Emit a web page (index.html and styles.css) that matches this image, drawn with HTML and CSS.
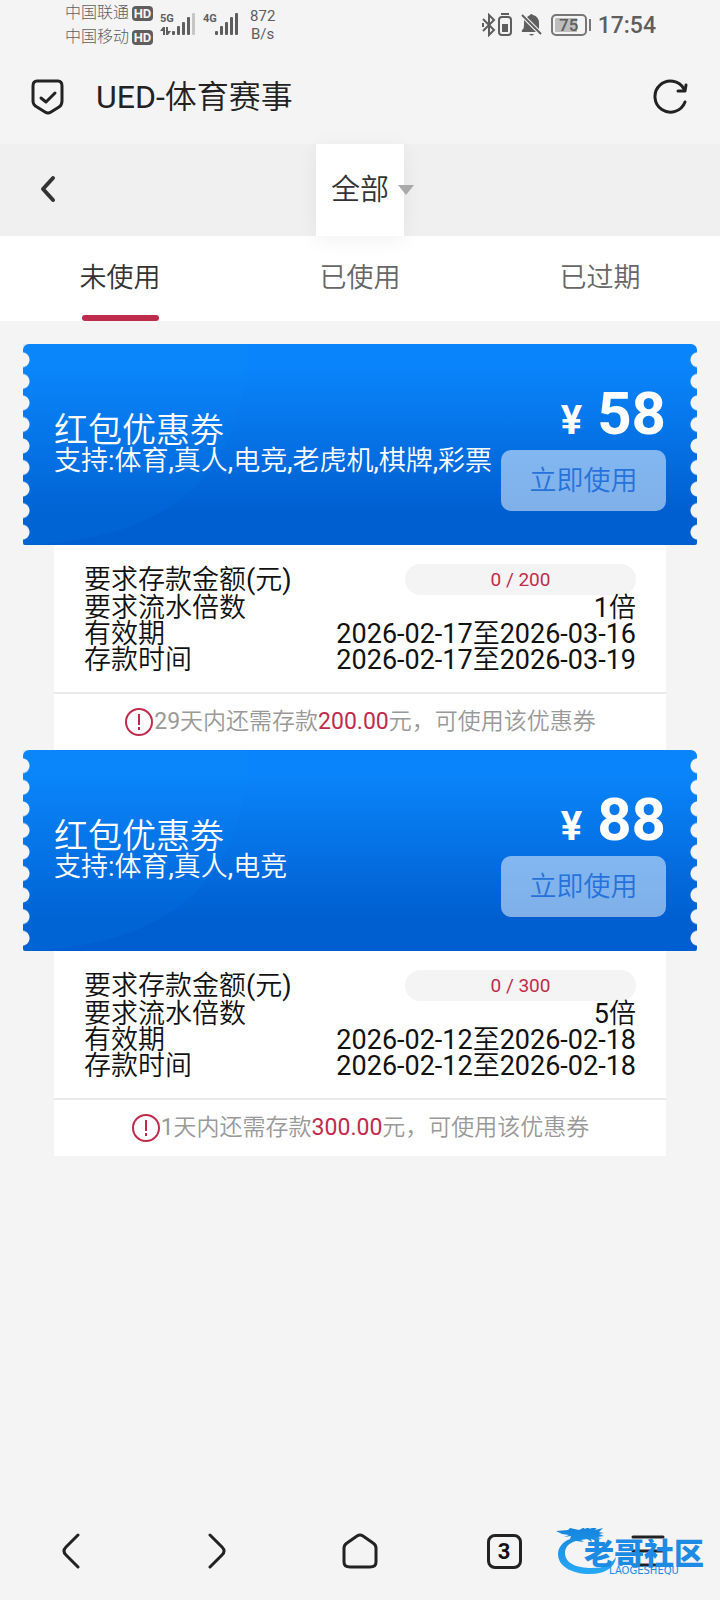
FILE: index.html
```html
<!DOCTYPE html>
<html lang="zh-CN">
<head>
<meta charset="utf-8">
<meta name="viewport" content="width=device-width, initial-scale=1">
<title>UED-体育赛事</title>
<link rel="stylesheet" href="styles.css">
</head>
<body>
<div class="status">
  <div class="carriers">
    <div class="carrier">中国联通<span class="hd">HD</span></div>
    <div class="carrier">中国移动<span class="hd">HD</span></div>
  </div>
  <svg class="signal" width="36" height="26" viewBox="0 0 36 26" fill="#5e5e5e" aria-hidden="true">
    <text class="gen" x="0" y="10">5G</text>
    <path d="M3 15v8h2v-8zM0 19l3-4v4zM6 15v8h2v-8zM8 23l3-4H8z"/>
    <rect x="12" y="19" width="3" height="4" rx="1"/><rect x="17" y="14" width="3" height="9" rx="1"/><rect x="22" y="10" width="3" height="13" rx="1"/><rect x="27" y="5" width="3" height="18" rx="1"/><rect x="32" y="1" width="3" height="22" rx="1" fill="#c6c6c6"/>
  </svg>
  <svg class="signal" width="36" height="26" viewBox="0 0 36 26" fill="#5e5e5e" aria-hidden="true">
    <text class="gen" x="0" y="10">4G</text>
    <rect x="12" y="19" width="3" height="4" rx="1"/><rect x="17" y="14" width="3" height="9" rx="1"/><rect x="22" y="10" width="3" height="13" rx="1"/><rect x="27" y="5" width="3" height="18" rx="1"/><rect x="32" y="1" width="3" height="22" rx="1"/>
  </svg>
  <div class="speed">872<br>B/s</div>
  <div class="status-right">
    <svg width="32" height="24" viewBox="0 0 32 24" fill="none" stroke="#5e5e5e" stroke-width="2" aria-hidden="true">
      <path d="M2 6l11 11-5 5V2l5 5L2 18"/><path d="M2 10v4" />
      <rect x="18" y="4" width="12" height="18" rx="3"/><path d="M20 1h8"/><rect x="21" y="11" width="6" height="8" fill="#5e5e5e" stroke="none"/>
    </svg>
    <svg width="22" height="24" viewBox="0 0 22 24" fill="#5e5e5e" aria-hidden="true">
      <path d="M6 4c1-1 2-1 3-2q1-2 3 0c4 1 6 4 6 8v6zM3 7l12 12H1q-1-1 1-3 1-1 1-4zM8 21h5q-2 3-5 0z"/><path d="M1 2l19 19" stroke="#5e5e5e" stroke-width="2"/>
    </svg>
    <span class="battery">75</span>
    <span class="clock">17:54</span>
  </div>
</div>

<header class="address">
  <svg width="36" height="38" viewBox="0 0 36 38" fill="none" stroke="#222" stroke-width="3" stroke-linecap="round" stroke-linejoin="round" aria-hidden="true">
    <path d="M7 3h21q4 0 4 5v15q0 4-3 6l-8 5q-3 2-6 0l-8-5q-4-2-4-6V8q0-5 4-5z"/><path d="M11 20l5 4 9-9"/>
  </svg>
  <h1 class="address-title">UED-体育赛事</h1>
  <button class="icon-button" type="button" aria-label="刷新">
    <svg width="36" height="36" viewBox="0 0 36 36" fill="none" stroke="#222" stroke-width="3" stroke-linecap="round" stroke-linejoin="round">
      <path d="M32 23A15.500 15.500 0 1 1 31 10"/><path d="M25 12h7l1-6"/>
    </svg>
  </button>
</header>

<nav class="filter">
  <button class="icon-button" type="button" aria-label="返回">
    <svg width="18" height="28" viewBox="0 0 18 28" fill="none" stroke="#333" stroke-width="4" stroke-linecap="round" stroke-linejoin="round"><path d="M15 3L5 14l10 11"/></svg>
  </button>
  <button class="filter-choice" type="button">全部</button>
</nav>

<nav class="tabs">
  <button class="tab tab-active" type="button">未使用</button>
  <button class="tab" type="button">已使用</button>
  <button class="tab" type="button">已过期</button>
</nav>

<main class="coupons">
  <article class="coupon">
    <div class="coupon-head">
      <svg class="coupon-art" width="260" height="201" viewBox="0 0 260 201" aria-hidden="true"><path d="M0 0h225C224 80 195 195 0 201z"/><path d="M0 21h154C152 80 110 130 0 138z"/></svg>
      <div class="coupon-info">
        <h2 class="coupon-title">红包优惠劵</h2>
        <p class="coupon-scope">支持:体育,真人,电竞,老虎机,棋牌,彩票</p>
      </div>
      <div class="coupon-side">
        <p class="price"><span class="yen">¥</span> 58</p>
        <button class="use" type="button">立即使用</button>
      </div>
    </div>
    <div class="coupon-body">
      <dl class="rows">
        <div class="row row-first"><dt>要求存款金额(元)</dt><dd class="pill">0 / 200</dd></div>
        <div class="row"><dt>要求流水倍数</dt><dd>1倍</dd></div>
        <div class="row"><dt>有效期</dt><dd>2026-02-17至2026-03-16</dd></div>
        <div class="row"><dt>存款时间</dt><dd>2026-02-17至2026-03-19</dd></div>
      </dl>
      <p class="notice">
        <svg width="30" height="30" viewBox="0 0 30 30" fill="none" stroke="#c02b4c" stroke-width="2" aria-hidden="true"><circle cx="15" cy="15" r="13"/><path d="M15 7v11M15 20v3"/></svg>
        <span>29天内还需存款<b class="due">200.00</b>元，可使用该优惠券</span>
      </p>
    </div>
  </article>

  <article class="coupon">
    <div class="coupon-head">
      <svg class="coupon-art" width="260" height="201" viewBox="0 0 260 201" aria-hidden="true"><path d="M0 0h225C224 80 195 195 0 201z"/><path d="M0 21h154C152 80 110 130 0 138z"/></svg>
      <div class="coupon-info">
        <h2 class="coupon-title">红包优惠劵</h2>
        <p class="coupon-scope">支持:体育,真人,电竞</p>
      </div>
      <div class="coupon-side">
        <p class="price"><span class="yen">¥</span> 88</p>
        <button class="use" type="button">立即使用</button>
      </div>
    </div>
    <div class="coupon-body">
      <dl class="rows">
        <div class="row row-first"><dt>要求存款金额(元)</dt><dd class="pill">0 / 300</dd></div>
        <div class="row"><dt>要求流水倍数</dt><dd>5倍</dd></div>
        <div class="row"><dt>有效期</dt><dd>2026-02-12至2026-02-18</dd></div>
        <div class="row"><dt>存款时间</dt><dd>2026-02-12至2026-02-18</dd></div>
      </dl>
      <p class="notice">
        <svg width="30" height="30" viewBox="0 0 30 30" fill="none" stroke="#c02b4c" stroke-width="2" aria-hidden="true"><circle cx="15" cy="15" r="13"/><path d="M15 7v11M15 20v3"/></svg>
        <span>1天内还需存款<b class="due">300.00</b>元，可使用该优惠券</span>
      </p>
    </div>
  </article>
</main>

<footer class="toolbar">
  <button class="icon-button" type="button" aria-label="后退">
    <svg width="36" height="36" viewBox="0 0 36 36" class="line"><path d="M24 2L12 14q-4 4 0 8l12 12"/></svg>
  </button>
  <button class="icon-button" type="button" aria-label="前进">
    <svg width="36" height="36" viewBox="0 0 36 36" class="line"><path d="M12 2l12 12q4 4 0 8L12 34"/></svg>
  </button>
  <button class="icon-button" type="button" aria-label="主页">
    <svg width="36" height="36" viewBox="0 0 36 36" class="line"><path d="M15 3q3-2 6 0l10 7q3 2 3 5v14q0 5-6 5H8q-6 0-6-5V15q0-3 3-5z"/></svg>
  </button>
  <button class="icon-button" type="button" aria-label="标签页"><span class="count">3</span></button>
  <button class="icon-button" type="button" aria-label="菜单">
    <svg width="36" height="36" viewBox="0 0 36 36" class="line"><path d="M3 4h30M3 18h30M3 32h25"/></svg>
  </button>
  <div class="brand">
    <svg class="brand-mark" width="64" height="50" viewBox="0 0 64 50" aria-hidden="true">
      <defs><linearGradient id="wave" x1="0" y1="0" x2="0" y2="1"><stop offset="0" stop-color="#1583dc"/><stop offset="1" stop-color="#27a9f5"/></linearGradient></defs>
      <path fill="url(#wave)" d="M14 11C6 14 2 20 2 26c0 12 13 20 32 20 16 0 25-7 26-17-5 8-13 11-24 11-16 0-27-5-27-15 0-6 4-10 11-12l8 1-3-2 6-1 5 3-1-3 6 2-2-3 7 1-4-2 6-1-5-2 5-1-5-1 4-4-8 2 3-4-9 3 1-2-6 2 1-2-6 3-9-2-2 2L0 3l6 3 7 1-5 2 7-1z"/>
    </svg>
    <div class="brand-text"><span class="brand-name">老哥社区</span><span class="brand-latin">LAOGESHEQU</span></div>
  </div>
</footer>
</body>
</html>
```

FILE: styles.css
```css
* { box-sizing: border-box; }

body {
  margin: 0;
  min-height: 100vh;
  display: flex;
  flex-direction: column;
  background: #f4f4f4;
  color: #111;
  font-family: Roboto, "Noto Sans CJK SC DemiLight", "Noto Sans CJK SC", sans-serif;
}

h1, h2, p, dl, dd { margin: 0; font-weight: 400; }

button {
  padding: 0;
  border: 0;
  background: none;
  color: inherit;
  font: inherit;
}

svg { display: block; flex: none; }

.icon-button { display: flex; align-items: center; justify-content: center; }

/* Status bar */
.status {
  display: flex;
  align-items: center;
  gap: 7px;
  height: 50px;
  padding: 0 64px 0 65px;
  color: #5e5e5e;
}

.carriers {
  font-family: Roboto, "Noto Sans CJK SC", sans-serif;
  font-size: 16px;
  font-weight: 300;
  line-height: 24px;
}

.carrier { display: flex; align-items: center; gap: 3px; }

.hd {
  width: 21px;
  border-radius: 4px;
  background: #5e5e5e;
  color: #f4f4f4;
  font-size: 13px;
  font-weight: 700;
  line-height: 15px;
  text-align: center;
}

.gen { font: 700 11px Roboto, sans-serif; }
.speed { margin-left: 4px; font-size: 15px; line-height: 18px; text-align: center; }
.status-right { display: flex; align-items: center; gap: 8px; margin-left: auto; }

.battery {
  position: relative;
  width: 36px;
  border: 2px solid #777;
  border-radius: 5px;
  background: linear-gradient(90deg, #bdbdbd 75%, #f4f4f4 75%);
  box-shadow: inset 0 0 0 2px #f4f4f4;
  font-size: 17px;
  font-weight: 500;
  line-height: 18px;
  text-align: center;
}

.battery::after {
  content: "";
  position: absolute;
  top: 3px;
  right: -6px;
  width: 2px;
  height: 12px;
  background: #777;
}

.clock { margin-left: 3px; font-size: 23px; font-weight: 500; }

/* Browser address bar */
.address {
  display: flex;
  align-items: center;
  gap: 30px;
  height: 94px;
  padding: 0 31px 0 30px;
}

.address-title { flex: 1; color: #222; font-size: 32px; line-height: 40px; }

/* Page header */
.filter {
  display: grid;
  grid-template-columns: 1fr auto 1fr;
  height: 92px;
  padding: 0 38px;
  background: #f0f0f0;
}

.filter .icon-button { justify-self: start; padding-bottom: 2px; }

.filter-choice {
  position: relative;
  z-index: 1;
  width: 88px;
  padding-bottom: 6px;
  background: #fff;
  box-shadow: 0 4px 20px rgba(0, 0, 0, 0.06);
  color: #333;
  font-size: 29px;
}

.filter-choice::after {
  content: "";
  position: absolute;
  top: 41px;
  right: -10px;
  border: 8px solid transparent;
  border-top: 10px solid #aaa;
  border-bottom: 0;
}

.tabs {
  display: grid;
  grid-template-columns: repeat(3, 1fr);
  height: 85px;
  background: #fff;
}

.tab {
  display: flex;
  flex-direction: column;
  align-items: center;
  padding-top: 22px;
  color: #666;
  font-size: 27px;
  line-height: 40px;
}

.tab-active { color: #333; }

.tab-active::after {
  content: "";
  width: 77px;
  height: 6px;
  margin-top: auto;
  border-radius: 3px;
  background: #c02b4c;
}

/* Coupons */
.coupons { flex: 1; padding: 23px 23px 0; }

.coupon-head {
  position: relative;
  display: flex;
  justify-content: space-between;
  height: 201px;
  padding: 0 31px;
  border-radius: 6px 6px 2px 2px;
  background: linear-gradient(#0a84fa 0%, #0a84fa 12%, #005fd0 84%);
  color: #fff;
}

.coupon-head::before,
.coupon-head::after {
  content: "";
  position: absolute;
  top: 5px;
  bottom: 2px;
  left: 0;
  width: 7px;
  background: radial-gradient(circle at -1px 50%, #f4f4f4 7px, transparent 8px) 0 0 / 7px 22px;
  background-repeat: no-repeat round;
}

.coupon-head::before { z-index: 1; }
.coupon-head::after { right: 0; left: auto; transform: scaleX(-1); }

.coupon-art {
  position: absolute;
  top: 0;
  left: 0;
  fill: #0a90ff;
  opacity: 0.1;
}

.coupon-info { position: relative; padding-top: 69px; white-space: nowrap; }
.coupon-title { font-size: 34px; line-height: 35px; }
.coupon-scope { font-size: 27px; line-height: 27px; }

.coupon-side {
  position: relative;
  display: flex;
  flex-direction: column;
  align-items: flex-end;
  padding-top: 36px;
}

.price { height: 70px; font-size: 60px; font-weight: 700; line-height: 68px; }
.yen { font-size: 40px; line-height: 40px; }

.use {
  width: 165px;
  height: 61px;
  padding-bottom: 4px;
  border-radius: 10px;
  background: rgba(255, 255, 255, 0.5);
  color: #2672da;
  font-size: 27px;
}

.coupon-body { margin: 0 31px; background: #fff; }

.rows {
  padding: 19px 30px 19px;
  border-bottom: 2px solid #eaeaea;
  font-size: 27px;
  line-height: 26px;
}

.row { display: flex; align-items: center; justify-content: space-between; }
.row-first { height: 31px; }

.pill {
  width: 231px;
  border-radius: 16px;
  background: #f4f4f4;
  color: #c02b4c;
  font-size: 19px;
  line-height: 31px;
  text-align: center;
}

.notice {
  display: flex;
  align-items: center;
  justify-content: center;
  height: 56px;
  color: #999;
  font-size: 23px;
  line-height: 30px;
}

.due { color: #c02b4c; font-weight: 400; }

/* Browser toolbar */
.toolbar {
  position: relative;
  display: grid;
  grid-template-columns: repeat(5, 1fr);
  height: 98px;
}

.line {
  fill: none;
  stroke: #222;
  stroke-width: 3;
  stroke-linecap: round;
  stroke-linejoin: round;
}

.count {
  width: 35px;
  border: 3px solid #222;
  border-radius: 8px;
  font-size: 22px;
  font-weight: 700;
  line-height: 29px;
}

.brand {
  position: absolute;
  right: 16px;
  bottom: 22px;
  display: flex;
  align-items: flex-end;
  color: #1d8be4;
}

.brand-mark { margin-right: -36px; }
.brand-text { display: flex; flex-direction: column; align-items: center; }
.brand-name { font: 900 30px/26px "Noto Sans CJK SC", sans-serif; }
.brand-latin { font: 10px/14px "DejaVu Sans", sans-serif; }
```
